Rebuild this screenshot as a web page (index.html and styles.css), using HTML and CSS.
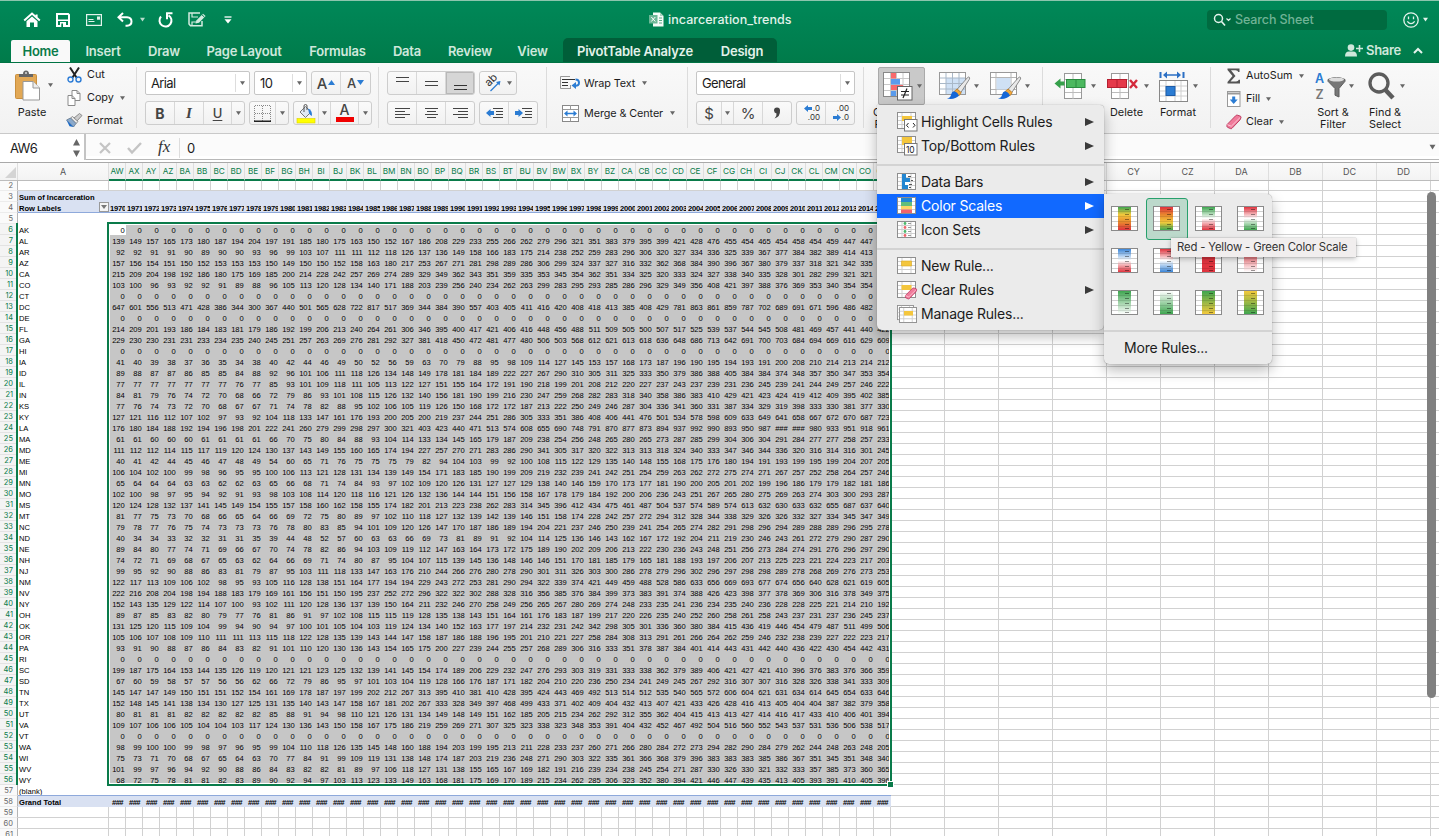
FILE: index.html
```
<!DOCTYPE html>
<html lang="en">
<head>
<meta charset="utf-8">
<title>incarceration_trends</title>
<link rel="stylesheet" href="styles.css">
</head>
<body>
<svg class="defs" aria-hidden="true">
  <defs>
    <symbol id="caret" viewBox="0 0 6 6"><path d="M0 .8h6L3 5.4z"/></symbol>
    <symbol id="eraser" viewBox="0 0 16 16">
      <path d="M1.2 10.4 9.8 1.6Q10.6.9 11.6 1.2l2.600.9Q15.300 2.500 15 3.700l-1 2.200L6 14.300q-.7.700-1.600.300L1.500 13.300Q.3 12.600 1.200 10.400z" fill="#f07b9b" stroke="#b8345a" stroke-width=".9"/>
      <path d="M1.300 10.700 5.300 12.200 14 3.600" fill="none" stroke="#fbc6d4" stroke-width="1"/>
    </symbol>
    <symbol id="grid19" viewBox="0 0 19 17">
      <rect x=".5" y=".5" width="18" height="16" fill="#fff" stroke="#8e8e8e"/>
      <path d="M1 4.500h17M1 8.500h17M1 12.500h17M5 1v15M14 1v15" stroke="#cfcfcf" fill="none"/>
    </symbol>
    <symbol id="brush" viewBox="0 0 26 26">
      <path d="M24.500 1.200Q25.600 2 24.800 3.500L15.500 18l-4-3.500L22.500 2Q23.700.6 24.500 1.200z" fill="#e9e9e9" stroke="#777" stroke-width=".9"/>
      <path d="M11.500 14 16 18l-2.500 3.500-5.500-4.500z" fill="#f2a93b" stroke="#b9741a" stroke-width=".8"/>
      <path d="M8 16.500q4 .5 5.500 5Q9 26 .5 24.500 4.500 23.500 5 20q.7-3 3-3.500z" fill="#1667d6"/>
    </symbol>
  </defs>
</svg>

<header class="titlebar">
  <div class="quick">
    <svg class="q-home" width="18" height="16" viewBox="0 0 18 16"><path d="M1.200 8.600 9 1.600l7.800 7M13.600 2.500v3" fill="none" stroke="#fff" stroke-width="2"/><path d="M3.500 9.300 9 4.500l5.500 4.800V15H11v-4.500H7V15H3.500z" fill="#fff"/></svg>
    <svg class="q-save" width="14" height="14" viewBox="0 0 14 14"><path d="M1 1h11.200l.8.8V13H1z" fill="none" stroke="#fff" stroke-width="2"/><path d="M2 6.500h10v1.400H2zM4 9h6v5H4z" fill="#fff"/><path d="M5.300 10.500h1.700V14H5.300z" fill="#007f4e"/></svg>
    <svg class="q-mail" width="16" height="12" viewBox="0 0 16 12"><rect x=".6" y=".6" width="14.800" height="10.800" fill="none" stroke="#e4f3ec" stroke-width="1.200"/><path d="M11 2.500h3v3.200h-3z" fill="#e4f3ec"/><path d="M2.500 5.500h5M2.500 7.500h6" stroke="#e4f3ec"/></svg>
    <svg class="q-undo" width="16" height="15" viewBox="0 0 16 15"><path d="M6 1 1.500 5.300 6 9.500M2 5.300h8q4.500.2 4.500 4.300T10 13.800H8.500" fill="none" stroke="#fff" stroke-width="2"/></svg>
    <svg class="q-caret"><use href="#caret"/></svg>
    <svg class="q-redo" width="15" height="15" viewBox="0 0 15 15"><path d="M3 4.500a6 6 0 1 0 7.500-1.200" fill="none" stroke="#fff" stroke-width="2"/><path d="M9 7.300V1.300h5.500" fill="none" stroke="#fff" stroke-width="2"/></svg>
    <svg class="q-pen" width="19" height="15" viewBox="0 0 19 15"><path d="M12 1H1v11l1.500 1.800H14V9" fill="none" stroke="#d3ebe0" stroke-width="1.500"/><path d="M4 1v4h6M4 14v-4h4" fill="none" stroke="#d3ebe0" stroke-width="1.200"/><path d="m7.500 11.500.8-3L15 1.800 17.600 4 11 10.800z" fill="#d3ebe0"/><path d="m14 2.800 2.500 2.400" stroke="#007f4e"/></svg>
    <svg class="q-more" width="8" height="8" viewBox="0 0 8 8"><path d="M.5 1h7" stroke="#fff" stroke-width="1.300"/><path d="M.5 3.200h7L4 7.500z" fill="#fff"/></svg>
  </div>
  <div class="doc">
    <svg width="15" height="15" viewBox="0 0 15 15"><path d="M4 .5h7L14.500 4v10.500H4z" fill="#f5fbf8"/><path d="M11 .5V4h3.500" fill="#a9d3c0"/><path d="M10 6h3M10 8.500h3M10 11h3" stroke="#58a985"/><rect y="3" width="8.500" height="8.500" fill="#6bb796"/><path d="m2.300 5 4 4.500M6.300 5l-4 4.500" stroke="#fff"/></svg>
    <span>incarceration_trends</span>
  </div>
  <div class="search">
    <svg width="18" height="14" viewBox="0 0 18 14"><circle cx="5.500" cy="5.500" r="4" fill="none" stroke="#e4f3ec" stroke-width="1.500"/><path d="m8.500 8.500 3.500 4" stroke="#e4f3ec" stroke-width="1.600"/><path d="m13.500 5.500 2 2 2-2" fill="none" stroke="#e4f3ec" stroke-width="1.200"/></svg>
    <span>Search Sheet</span>
  </div>
  <svg class="smile" width="16" height="16" viewBox="0 0 16 16"><circle cx="8" cy="8" r="7.200" fill="none" stroke="#e4f3ec" stroke-width="1.300"/><path d="M5.500 4.500v2.700M10.500 4.500v2.700M4.300 9.300q3.700 4.600 7.400 0" fill="none" stroke="#e4f3ec" stroke-width="1.300"/></svg>
  <svg class="smile-caret"><use href="#caret"/></svg>
</header>

<nav class="tabs">
  <a class="tab on">Home</a><a class="tab">Insert</a><a class="tab">Draw</a><a class="tab">Page Layout</a><a class="tab">Formulas</a><a class="tab">Data</a><a class="tab">Review</a><a class="tab">View</a>
  <div class="context"><a class="tab pivot">PivotTable Analyze</a><a class="tab">Design</a></div>
  <div class="share">
    <svg width="18" height="13" viewBox="0 0 18 13"><circle cx="6" cy="3.600" r="3.300" fill="#cfe8dc"/><path d="M0 12.500q0-5 4-5h4q4 0 4 5z" fill="#cfe8dc"/><path d="M11 4.500h7M14.500 1v7" stroke="#cfe8dc" stroke-width="1.600"/></svg>
    <span>Share</span>
    <svg width="10" height="7" viewBox="0 0 10 7"><path d="M1 6l4-4 4 4" fill="none" stroke="#e4f3ec" stroke-width="2"/></svg>
  </div>
</nav>

<section class="ribbon">
  <div class="group clip">
    <div class="paste">
      <div class="paste-row">
        <svg width="25" height="31" viewBox="0 0 25 31"><rect x=".5" y="4.500" width="21" height="24" rx="1" fill="#e2a855" stroke="#c98f3e"/><path d="M4 7V4h4Q8 .5 11 .5T14 4h4v3z" fill="#666"/><circle cx="11" cy="3" r="1" fill="#ddd"/><path d="M8 11.500h10l6.500 6.500v12H8z" fill="#fff" stroke="#999"/><path d="M18 11.500V18h6.500" fill="#eee" stroke="#999"/></svg>
        <svg class="caret"><use href="#caret"/></svg>
      </div>
      <span class="lbl">Paste</span>
    </div>
    <div class="clip-list">
      <div class="row-item"><svg width="16" height="16" viewBox="0 0 16 16"><path d="m3.500.5 6.500 10M12.500.5 6 10.500" stroke="#222" stroke-width="2" fill="none"/><circle cx="4" cy="12.500" r="2.500" fill="none" stroke="#2c7cd6" stroke-width="1.400"/><circle cx="12" cy="12.500" r="2.500" fill="none" stroke="#2c7cd6" stroke-width="1.400"/></svg><span>Cut</span></div>
      <div class="row-item"><svg width="16" height="16" viewBox="0 0 16 16"><path d="M5.500.5h5l3 3v7h-8z" fill="#fff" stroke="#8a8a8a"/><path d="M10.500.5v3h3" fill="none" stroke="#8a8a8a"/><path d="M1.500 5.500h4l3 3v7h-7z" fill="#fff" stroke="#8a8a8a"/><path d="M5.500 5.500v3h3" fill="none" stroke="#8a8a8a"/></svg><span>Copy</span><svg class="caret"><use href="#caret"/></svg></div>
      <div class="row-item"><svg width="17" height="15" viewBox="0 0 17 15"><path d="m8 5 5.500-4.500 2.500 2L11 8z" fill="#ccc" stroke="#777" stroke-width=".8"/><path d="M6.500 3.500 12 8.500l-2 2L4.500 5z" fill="#e8e8e8" stroke="#777" stroke-width=".8"/><path d="M4.500 5 10 10.500 7.500 14 .5 7z" fill="#8aa9cc" stroke="#66788c" stroke-width=".8"/><path d="m.5 7 7 7-4-.7z" fill="#1667c6"/></svg><span>Format</span></div>
    </div>
  </div>
  <div class="group font">
    <div class="line">
      <div class="field w-font"><span>Arial</span><i><svg class="caret"><use href="#caret"/></svg></i></div>
      <div class="field w-size"><span>10</span><i><svg class="caret"><use href="#caret"/></svg></i></div>
      <div class="seg"><b class="w29"><em class="big">A</em><svg class="up" width="7" height="5"><path d="M0 5 3.500 0 7 5z" fill="#2b7cd3"/></svg></b><b class="w29"><em>A</em><svg class="up" width="7" height="5"><path d="M0 0h7L3.500 5z" fill="#2b7cd3"/></svg></b></div>
    </div>
    <div class="line">
      <div class="seg"><b class="w29 t-b">B</b><b class="w29 t-i">I</b><b class="w28 t-u">U</b><b class="w11"><svg class="caret"><use href="#caret"/></svg></b></div>
      <div class="seg"><b class="w26"><svg width="17" height="17" viewBox="0 0 17 17"><path d="M.5 16V.5h16V16M8.500 1v15M1 8.500h15" fill="none" stroke="#888" stroke-dasharray="1 1"/><path d="M0 16.200h17" stroke="#222" stroke-width="1.400"/></svg></b><b class="w12"><svg class="caret"><use href="#caret"/></svg></b></div>
      <div class="seg"><b class="w25"><svg width="18" height="19" viewBox="0 0 18 19"><rect y="14.500" width="18" height="4.500" fill="#ff0" stroke="#dcd000" stroke-width=".6"/><path d="m3 8 5.500-5.500L14 8l-5.500 5.500z" fill="#dfe8f2" stroke="#777"/><path d="M7 8V2q0-1.500 1.500-1.500T10 2v4" fill="none" stroke="#555"/><path d="M11 4.500q4.500 1.500 4 7.500-2.500-1-3-3z" fill="#2b7cd3"/></svg></b><b class="w12"><svg class="caret"><use href="#caret"/></svg></b><b class="w28 colour"><em class="big">A</em><u></u></b><b class="w12 last"><svg class="caret"><use href="#caret"/></svg></b></div>
    </div>
  </div>
  <div class="group align">
    <div class="line">
      <div class="seg"><b class="w29"><svg width="13" height="20"><path d="M0 4.500h13M0 8.500h13" stroke="#444"/></svg></b><b class="w29"><svg width="13" height="20"><path d="M0 8.500h13M0 12.500h13" stroke="#444"/></svg></b><b class="w28 pressed"><svg width="13" height="20"><path d="M0 12.500h13M0 16.500h13" stroke="#333"/></svg></b></div>
      <div class="seg"><b class="w35"><svg width="18" height="18" viewBox="0 0 18 18"><text x="0" y="0" transform="translate(5 13) rotate(-45)" font-size="11" fill="#333">ab</text><path d="m6.500 17 9-9" stroke="#2b7cd3" stroke-width="1.300"/><path d="m12 8 4.500-1-1 4.500z" fill="#2b7cd3"/></svg><svg class="caret"><use href="#caret"/></svg></b></div>
    </div>
    <div class="line">
      <div class="seg"><b class="w29"><svg width="15" height="13"><path d="M0 1.500h15M0 4.500h10M0 7.500h15M0 10.500h10" stroke="#444"/></svg></b><b class="w29"><svg width="15" height="13"><path d="M1 1.500h13M3 4.500h9M1 7.500h13M3 10.500h9" stroke="#444"/></svg></b><b class="w28"><svg width="15" height="13"><path d="M0 1.500h15M5 4.500h10M0 7.500h15M5 10.500h10" stroke="#444"/></svg></b></div>
      <div class="seg"><b class="w29"><svg width="17" height="13"><path d="M7 1.500h10M10 4.500h7M10 7.500h7M7 10.500h10" stroke="#444"/><path d="M0 6l4.500-4v2H8v4H4.500v2z" fill="#2b7cd3"/></svg></b><b class="w28"><svg width="17" height="13"><path d="M7 1.500h10M10 4.500h7M10 7.500h7M7 10.500h10" stroke="#444"/><path d="M8 6 3.500 2v2H0v4h3.500v2z" fill="#2b7cd3"/></svg></b></div>
    </div>
  </div>
  <div class="group wrap">
    <div class="row-item"><svg width="20" height="14" viewBox="0 0 20 14"><path d="M10 .5H.5v12H11M10.500 9v4" fill="none" stroke="#999"/><path d="M2 3.500h13M2 6.500h6M2 9.500h6" stroke="#333"/><path d="M15.500 3.500q3.500 0 3.500 3.300T15 9.700" fill="none" stroke="#2b7cd3" stroke-width="2"/><path d="m11.500 9.500 4.500-3.500v7z" fill="#2b7cd3"/></svg><span>Wrap Text</span><svg class="caret"><use href="#caret"/></svg></div>
    <div class="row-item"><svg width="18" height="17" viewBox="0 0 18 17"><rect x="1.500" y=".5" width="16" height="16" fill="#fff" stroke="#888"/><path d="M1.500 4.500h16M1.500 12.500h16M9.500 0v4M9.500 12.500v4" stroke="#999"/><path d="M5 8.500h9" stroke="#2b7cd3" stroke-width="1.500"/><path d="m3 8.500 3.500-3v6zM16 8.500l-3.500-3v6z" fill="#2b7cd3"/></svg><span>Merge &amp; Center</span><svg class="caret"><use href="#caret"/></svg></div>
  </div>
  <div class="group number">
    <div class="line"><div class="field w-num"><span>General</span><i><svg class="caret"><use href="#caret"/></svg></i></div></div>
    <div class="line">
      <div class="seg"><b class="w25 t-num">$</b><b class="w12"><svg class="caret"><use href="#caret"/></svg></b><b class="w29 t-num">%</b><b class="w28"><svg width="8" height="12"><path d="M1 3.500a3 3 0 0 1 6 0q.5 6-5.500 8Q4 8.500 3.500 6.400 1 6 1 3.500z" fill="#444"/></svg></b></div>
      <div class="seg"><b class="w29 dec"><span><svg width="8" height="7"><path d="M0 3.500 4 0v2h4v3H4v2z" fill="#2b7cd3"/></svg>.0</span><span>.00</span></b><b class="w28 dec"><span>.00</span><span><svg width="8" height="7"><path d="M8 3.500 4 0v2H0v3h4v2z" fill="#2b7cd3"/></svg>.0</span></b></div>
    </div>
  </div>
  <div class="group styles">
    <div class="tile cf">
      <div class="tile-top held"><svg width="30" height="29" viewBox="0 0 30 29"><rect x=".5" y=".5" width="26" height="24" fill="#fff" stroke="#888"/><path d="M1 6.500h25M1 12.500h25M1 18.500h25M7.500 1v23M13.500 1v23M20 1v23" stroke="#c8c8c8"/><path d="M8 1h5v5.500H8zM8 13h12v5H8z" fill="#f8696b"/><path d="M8 7h9v5.500H8zM8 19h5v5H8z" fill="#5a9bec"/><rect x="14.500" y="14.500" width="14.500" height="13.500" fill="#fff" stroke="#666"/><path d="M18 19.500h8M18 23h8M24 16.500l-4 9.500" stroke="#222" stroke-width="1.200"/></svg><svg class="caret"><use href="#caret"/></svg></div>
      <span class="lbl">Conditional<br>Formatting</span>
    </div>
    <div class="tile ft"><div class="tile-top"><svg width="33" height="29" viewBox="0 0 33 29"><rect x=".5" y=".5" width="26" height="22" fill="#fff" stroke="#999"/><path d="M7 6h19v16H7z" fill="#cfe1f5"/><path d="M1 6h25M1 11.500h25M1 17h25M7 1v21M13.500 1v21M20 1v21" stroke="#a9b8c8"/><use href="#brush" x="7" y="4" width="25" height="24"/></svg><svg class="caret"><use href="#caret"/></svg></div></div>
    <div class="tile cs-t"><div class="tile-top"><svg width="33" height="29" viewBox="0 0 33 29"><rect x=".5" y=".5" width="26" height="22" fill="#fff" stroke="#999"/><path d="M1 5.500h25M1 17.500h25M6 1v21M21 1v21" stroke="#b5b5b5"/><path d="M6.500 6h14v11.500h-14z" fill="#cfe1f5"/><use href="#brush" x="7" y="4" width="25" height="24"/></svg><svg class="caret"><use href="#caret"/></svg></div></div>
  </div>
  <div class="group cells">
    <div class="tile t-ins"><div class="tile-top"><svg width="32" height="27" viewBox="0 0 32 27"><rect x="10.500" y=".5" width="17" height="25" fill="#fff" stroke="#999"/><path d="M11 6.500h16M11 19.500h16M19 1v25" stroke="#bbb"/><path d="m.5 10.500 6-5v3h4v4h-4v3z" fill="#36a04b"/><rect x="12.500" y="6.500" width="18.500" height="8" fill="#4cb85f" stroke="#2b8c40"/><path d="M22 7v7" stroke="#2b8c40"/></svg><svg class="caret"><use href="#caret"/></svg></div><span class="lbl">Insert</span></div>
    <div class="tile t-del"><div class="tile-top"><svg width="32" height="27" viewBox="0 0 32 27"><rect x="4.500" y=".5" width="17" height="25" fill="#fff" stroke="#999"/><path d="M5 6.500h16M5 19.500h16M13 1v25" stroke="#bbb"/><rect x=".5" y="6.500" width="19" height="8" fill="#e5394a" stroke="#b51f30"/><path d="M10 7v7" stroke="#b51f30"/><path d="m23 7 7 8M30 7l-7 8" stroke="#d42a3c" stroke-width="2.400"/></svg><svg class="caret"><use href="#caret"/></svg></div><span class="lbl">Delete</span></div>
    <div class="tile t-fmt"><div class="tile-top"><svg width="30" height="31" viewBox="0 0 30 31"><path d="M1.500 1v6M24.500 1v6" stroke="#2b6fc4" stroke-width="2"/><path d="M6 4h14" stroke="#2b6fc4" stroke-width="1.500"/><path d="m4 4 4-3.500v7zM22 4l-4-3.500v7z" fill="#2b6fc4"/><rect x=".5" y="9.500" width="28" height="21" fill="#fff" stroke="#888"/><path d="M1 15h27M1 25h27M7 10v20M16 10v20M22 10v20M1 20h27" stroke="#d0d0d0"/><rect x="7" y="15.500" width="9" height="9" fill="#2b7cd3" stroke="#1d5ca8"/></svg><svg class="caret"><use href="#caret"/></svg></div><span class="lbl">Format</span></div>
  </div>
  <div class="group edit">
    <div class="edit-list">
      <div class="row-item"><svg width="15" height="16" viewBox="0 0 15 16"><path d="M1 .5h12v3.500h-1.200Q11.300 2.300 9 2.300H4.500L9 8l-5 5.500h5.500q2.300 0 2.800-1.800h1.200V15.500H1V14l5-6L1 2z" fill="#555"/></svg><span>AutoSum</span><svg class="caret"><use href="#caret"/></svg></div>
      <div class="row-item"><svg width="14" height="16" viewBox="0 0 14 16"><rect x=".5" y=".5" width="12.500" height="15" fill="#fff" stroke="#999"/><path d="M1 2.500h12" stroke="#999" stroke-width="2"/><path d="M5.200 5.500h3v3h2.500L6.700 13 2.700 8.500h2.500z" fill="#2b7cd3"/></svg><span>Fill</span><svg class="caret"><use href="#caret"/></svg></div>
      <div class="row-item"><svg width="16" height="16"><use href="#eraser"/></svg><span>Clear</span><svg class="caret"><use href="#caret"/></svg></div>
    </div>
    <div class="tile t-sort"><div class="tile-top"><svg width="32" height="30" viewBox="0 -1 32 30"><text x="0" y="11" font-size="12.500" font-weight="600" fill="#2b7cd3">A</text><text x=".5" y="27" font-size="12.500" font-weight="600" fill="#777">Z</text><path d="M13 7.500q8.500-4 17 0v1.800l-6 7.200v8.500l-4-1.800V16.500l-7-7.200z" fill="#777" stroke="#5e5e5e"/><ellipse cx="21.500" cy="7.500" rx="7.500" ry="2" fill="#ddd"/></svg><svg class="caret"><use href="#caret"/></svg></div><span class="lbl">Sort &amp;<br>Filter</span></div>
    <div class="tile t-find"><div class="tile-top"><svg width="28" height="28" viewBox="0 0 28 28"><circle cx="11" cy="11" r="9" fill="none" stroke="#5c5c5c" stroke-width="3.300"/><path d="m17.500 18 7.500 8" stroke="#5c5c5c" stroke-width="4.500"/></svg><svg class="caret"><use href="#caret"/></svg></div><span class="lbl">Find &amp;<br>Select</span></div>
  </div>
</section>

<section class="formula">
  <div class="namebox"><span>AW6</span><svg width="7" height="18" viewBox="0 0 7 18"><path d="M0 6.500 3.500 0 7 6.500zM0 11.500h7L3.500 18z" fill="#666"/></svg></div>
  <svg class="f-x" width="12" height="12"><path d="m1 1 10 10M11 1 1 11" stroke="#c4c4c4" stroke-width="2.200"/></svg>
  <svg class="f-ok" width="15" height="12"><path d="m1 6 4 4.500L14 1" fill="none" stroke="#c4c4c4" stroke-width="2.400"/></svg>
  <span class="fx">fx</span>
  <span class="fval">0</span>
  <svg class="caret f-drop"><use href="#caret"/></svg>
</section>

<main class="sheet" id="sheet">
  <div class="selection"><span class="handle"></span></div>
  <div class="rowbar"></div>
  <div class="scroll"></div>
</main>

<div class="menu">
  <div class="mi"><svg width="21" height="20" viewBox="0 0 21 20"><use href="#grid19" width="19" height="17"/><path d="M5 4h10v5H5z" fill="#f4c63d"/><rect x="7.500" y="7.500" width="12.500" height="11.500" fill="#fff" stroke="#777"/><path d="m11.500 11-2 2.300 2 2.200M16 11l2 2.300-2 2.200" fill="none" stroke="#222"/></svg><span>Highlight Cells Rules</span><i></i></div>
  <div class="mi"><svg width="21" height="20" viewBox="0 0 21 20"><use href="#grid19" width="19" height="17"/><path d="M5 1h10v8H5z" fill="#f4c63d"/><rect x="7.500" y="7.500" width="12.500" height="11.500" fill="#fff" stroke="#777"/><text x="9" y="16.500" font-size="8.500" fill="#222">10</text></svg><span>Top/Bottom Rules</span><i></i></div>
  <hr>
  <div class="mi"><svg width="21" height="20" viewBox="0 0 21 20"><use href="#grid19" y="1" width="19" height="17"/><path d="M5 2h4v4h4v4H8v3h3v4H5z" fill="#2386d1"/><path d="M11 4.500h3M14 8.500h2M12 12.500h3M12 15.500h2" stroke="#555"/></svg><span>Data Bars</span><i></i></div>
  <div class="mi active"><svg width="21" height="20" viewBox="0 0 21 20"><use href="#grid19" y="1" width="19" height="17"/><path d="M4 2h11v4H4z" fill="#2386d1"/><path d="M4 6h11v4H4z" fill="#63be7b"/><path d="M4 10h11v3.500H4z" fill="#fcd667"/><path d="M4 13.500h11V17H4z" fill="#f0626b"/></svg><span>Color Scales</span><i></i></div>
  <div class="mi"><svg width="21" height="20" viewBox="0 0 21 20"><use href="#grid19" y="1" width="19" height="17"/><g fill="#f0626b"><circle cx="8" cy="7.500" r="1.400"/><circle cx="8" cy="15.500" r="1.400"/></g><g fill="#4cb86a"><circle cx="8" cy="3.500" r="1.400"/><circle cx="8" cy="11.500" r="1.400"/></g><path d="M11 3.500h3M11 7.500h3M11 11.500h3M11 15.500h3" stroke="#999"/></svg><span>Icon Sets</span><i></i></div>
  <hr>
  <div class="mi"><svg width="21" height="20" viewBox="0 0 21 20"><use href="#grid19" y="1" width="19" height="17"/><path d="M4.500 5h10v5h-10z" fill="#f4c63d" stroke="#d8a826" stroke-width=".6"/></svg><span>New Rule...</span></div>
  <div class="mi"><svg width="21" height="20" viewBox="0 0 21 20"><use href="#grid19" y="1" width="19" height="17"/><path d="M4.500 5h10v5h-10z" fill="#f4c63d"/><use href="#eraser" x="7.500" y="7" width="13" height="13"/></svg><span>Clear Rules</span><i></i></div>
  <div class="mi"><svg width="21" height="20" viewBox="0 0 21 20"><use href="#grid19" y="1" width="17" height="15.200"/><use href="#grid19" x="2" y="3" width="18" height="16"/><path d="M7 7h9v4.500H7z" fill="#f4c63d"/></svg><span>Manage Rules...</span></div>
</div>

<div class="submenu">
  <div class="scales" id="scales"></div>
  <hr>
  <div class="more">More Rules...</div>
</div>
<div class="tooltip">Red - Yellow - Green Color Scale</div>
<script src="sheet.js"></script>
</body>
</html>
```
FILE: styles.css
```
* { box-sizing: border-box; }
body { margin: 0; width: 1439px; height: 836px; overflow: hidden; position: relative; display: flex; flex-direction: column; background: #fff; font-family: Inter, "Liberation Sans", sans-serif; color: #1c1c1c; }
svg { display: block; flex: none; overflow: visible; }
.defs { position: absolute; width: 0; height: 0; overflow: hidden; }
hr { border: 0; margin: 0; }

/* title bar */
.titlebar { height: 38px; flex: none; border-top: 1px solid #8cc5ad; background: linear-gradient(#008858, #008050); display: flex; align-items: center; }
.quick { display: flex; align-items: center; width: 648px; padding-left: 23px; }
.q-save { margin-left: 15px; }
.q-mail { margin-left: 16px; }
.q-undo { margin-left: 15px; }
.q-caret { width: 5px; height: 5px; margin-left: 7px; fill: #b9dccd; }
.q-redo { margin-left: 13px; }
.q-pen { margin-left: 15px; }
.q-more { margin-left: 17px; }
.doc { display: flex; align-items: center; width: 559px; font-size: 12.500px; font-weight: 500; color: #e2f2ea; }
.doc svg { margin-left: 1px; }
.doc span { margin-left: 4px; letter-spacing: .05px; }
.search { width: 180px; height: 20px; border-radius: 4px; background: #006b40; display: flex; align-items: center; padding-left: 6px; color: #70b396; font-size: 12.500px; font-weight: 500; }
.search span { margin-left: 4px; letter-spacing: -.1px; }
.smile { margin-left: 16px; }
.smile-caret { width: 5px; height: 5px; margin-left: 4px; fill: #e4f3ec; }

/* tabs */
.tabs { height: 25px; flex: none; background: linear-gradient(#008050, #007b4a); border-bottom: 1px solid #007344; display: flex; align-items: flex-end; padding-left: 11px; }
.tab { display: block; height: 22px; line-height: 23px; text-align: center; font-size: 13px; font-weight: 600; letter-spacing: -.2px; color: #cfe8dc; width: 55px; white-space: nowrap; }
.tab.on { width: 59px; background: #f9f9f9; color: #0a7b4a; border-radius: 2px 2px 0 0; }
.tab:nth-child(2) { width: 66px; }
.tab:nth-child(3) { width: 56px; }
.tab:nth-child(4) { width: 104px; }
.tab:nth-child(5) { width: 83px; }
.tab:nth-child(6) { width: 56px; }
.tab:nth-child(7) { width: 70px; }
.tab:nth-child(8) { width: 55px; }
.context { width: 214px; height: 24px; margin-left: 3px; background: #005e39; border-radius: 5px 5px 0 0; display: flex; align-items: flex-end; }
.context .tab { color: #e3f2ea; width: 70px; }
.context .tab.pivot { width: 144px; }
.share { margin-left: 568px; height: 24px; display: flex; align-items: center; font-size: 13px; font-weight: 600; color: #cfe8dc; letter-spacing: -.3px; }
.share span { margin: 0 12px 0 3px; }

/* ribbon */
.ribbon { height: 71px; flex: none; background: linear-gradient(#f9f9f9, #f2f2f2); border-bottom: 1px solid #c9c9c9; display: flex; font-size: 10.800px; }
.group { position: relative; flex: none; height: 70px; }
.group::after { content: ""; position: absolute; right: 0; top: 4px; width: 1px; height: 61px; background: #dcdcdc; }
.group.edit::after { display: none; }
.caret { width: 5px; height: 6px; fill: #666; flex: none; }
.clip { width: 137px; display: flex; }
.font { width: 242px; }
.align { width: 168px; }
.wrap { width: 141px; padding: 10px 0 0 13px; display: flex; flex-direction: column; gap: 10px; }
.number { width: 176px; }
.styles { width: 179px; display: flex; }
.cells { width: 168px; display: flex; }
.edit { width: 228px; display: flex; }
.font, .align, .number { padding: 8px 0 0 8px; display: flex; flex-direction: column; gap: 6px; }
.line { display: flex; gap: 4px; height: 24px; }
.paste { width: 66px; padding: 6px 0 0 15px; }
.paste-row { display: flex; align-items: center; gap: 8px; height: 32px; }
.lbl { display: block; text-align: center; line-height: 12px; font-size: 10.900px; white-space: nowrap; }
.paste .lbl { width: 34px; margin-top: 5px; }
.row-item { display: flex; align-items: center; height: 23px; white-space: nowrap; }
.clip-list .row-item svg:first-child { width: 17px; }
.clip-list .row-item span { margin-left: 4px; }
.row-item .caret { margin-left: 6px; }
.wrap .row-item { height: 20px; }
.wrap .row-item svg:first-child { width: 20px; }
.wrap .row-item span { margin-left: 4px; letter-spacing: -.08px; }
.wrap .row-item .caret { margin-left: 7px; }
.field { height: 24px; border: 1px solid #c6c6c6; border-radius: 2px; background: #fff; display: flex; align-items: center; justify-content: space-between; font-size: 13px; letter-spacing: -.65px; padding-left: 5px; }
.field i { width: 14px; height: 18px; border-left: 1px solid #ddd; display: flex; align-items: center; justify-content: center; }
.w-font { width: 105px; }
.w-size { width: 53px; }
.w-num { width: 159px; }
.seg { height: 24px; border: 1px solid #cdcdcd; border-radius: 3px; background: linear-gradient(#fafafa, #f1f1f1); display: flex; overflow: hidden; }
.seg b { font-weight: 400; border-right: 1px solid #d8d8d8; display: flex; align-items: center; justify-content: center; height: 22px; }
.seg b:last-child { border-right: 0; }
.seg em { font-style: normal; font-weight: 500; font-size: 13px; color: #444; }
.seg em.big { font-size: 15px; }
.seg .up { margin: 0 0 2px 1px; }
.w29 { width: 29px; } .w28 { width: 28px; } .w26 { width: 26px; } .w25 { width: 25px; } .w12 { width: 12px; } .w11 { width: 12px; } .w35 { width: 36px; gap: 5px; }
.seg .t-b { font-weight: 700; font-size: 14px; color: #444; }
.seg .t-i { font: italic 700 15px "Liberation Serif", serif; color: #444; }
.seg .t-u { font-weight: 500; font-size: 13px; color: #444; text-decoration: underline; text-underline-offset: 2px; }
.seg .t-num { font-size: 15px; color: #444; }
.colour { flex-direction: column; }
.seg .colour { justify-content: flex-start; }
.colour em.big { line-height: 15px; font-size: 14px; }
.colour u { width: 18px; height: 5px; background: #f00000; }
.pressed { background: #d6d6d6; box-shadow: inset 0 0 0 1px #b8b8b8; }
.seg .dec { flex-direction: column; align-items: flex-end; padding-right: 5px; font-size: 8px; line-height: 9px; color: #333; }
.dec span { display: flex; align-items: center; gap: 1px; }
.tile { display: flex; flex-direction: column; align-items: flex-start; }
.tile-top { display: flex; align-items: center; height: 38px; margin-top: 4px; }
.tile .lbl { margin-top: 1px; }
.cf { width: 74px; padding-left: 14px; }
.held { width: 47px; background: #c9c9c9; border: 1px solid #aaa; border-radius: 2px; padding-left: 4px; }
.held .caret { margin-left: 4px; }
.cf .lbl { margin-left: -5px; }
.ft, .cs-t { width: 51px; }
.ft .tile-top, .cs-t .tile-top { padding-left: 1px; }
.ft .caret, .cs-t .caret { margin-left: 2px; }
.t-ins { width: 64px; padding-left: 11px; }
.t-ins .caret, .t-del .caret { margin-left: 5px; }
.t-del { width: 52px; }
.t-fmt .caret { margin-left: 4px; }
.t-del .lbl { margin-left: 3px; }
.t-fmt .lbl { margin-left: 1px; }
.edit-list { width: 104px; padding: 1px 0 0 15px; }
.edit-list .row-item svg:first-child { width: 16px; }
.edit-list .row-item span { margin-left: 4px; }
.t-sort { width: 53px; }
.t-sort .caret { margin-left: 2px; }
.t-sort .lbl, .t-find .lbl { width: 36px; }
.t-find .caret { margin-left: 4px; }
.t-find .lbl { margin-left: -1px; }

/* formula bar */
.formula { height: 29px; flex: none; background: linear-gradient(#fbfbfb 0 22px, #fff 22px); border-bottom: 1px solid #a9a9a9; box-shadow: inset 0 -2px #fff, inset 0 -3px #b8b8b8; display: flex; align-items: center; padding-bottom: 2px; font-size: 13px; }
.namebox { width: 86px; height: 26px; background: #fff; border-right: 2px solid #c4c4c4; display: flex; align-items: center; justify-content: space-between; padding: 2px 4px 0 10px; letter-spacing: -.7px; }
.f-x { margin: 2px 0 0 13px; }
.f-ok { margin: 2px 0 0 16px; }
.fx { font: italic 17px "Liberation Serif", serif; margin: 2px 0 0 16px; width: 22px; height: 20px; line-height: 18px; color: #333; border-right: 1px solid #ddd; }
.fval { margin: 1px 0 0 7px; flex: 1; }
.f-drop { width: 7px; height: 6px; margin-right: 3px; }

/* sheet */
.sheet { position: relative; flex: 1; overflow: hidden; width: 1439px; font-family: "Liberation Sans", Arial, sans-serif; }
.r { display: grid; grid-template-columns: 18px 91px repeat(46, 17px) repeat(11, 54px); width: 1485px; height: 11px; font-size: 7.600px; line-height: 11px; color: #000; }
.r > * { overflow: hidden; white-space: nowrap; height: 11px; }
.r.head { height: 18px; font: 9px/17px Inter, sans-serif; color: #555; background: linear-gradient(#fafafa, #f3f3f3); border-bottom: 1px solid #bcbcbc; text-align: center; }
.head > * { border-right: 1px solid #dedede; height: 17px; }
.head .sel { color: #0a7b4a; background: linear-gradient(#f6f6f6, #efefef); border-bottom: 2px solid #0a7b4a; height: 18px; letter-spacing: -.1px; font-size: 8.200px; }
.corner::after { content: ""; display: block; margin: 4px 0 0 5px; border: solid transparent; border-width: 0 0 11px 11px; border-bottom-color: #d4d4d4; width: 0; }
.n { font-family: Inter, sans-serif; font-size: 7.500px; text-align: right; padding-right: 4px; color: #666; background: #fafafa; border-right: 1px solid #b5b5b5; border-bottom: 1px solid #ececec; }
.n.sel { color: #0a7b4a; background: #f4f4f4; border-bottom-color: #e3e3e3; }
.g { border-right: 1px solid #d1d1d1; border-bottom: 1px solid #d1d1d1; }
.r.first { height: 10px; }
.r.first > * { line-height: 10px; height: 10px; }
.a { padding: 1px 0 0 1px; }
.v { background: #c6c6c6; text-align: right; padding: 1px 1.500px 0 0; letter-spacing: -.15px; }
.v.cur { background: #fff; }
.blue { background: #d9e1f2; font-weight: 700; }
.yr { padding: 1px 0 0 1px; text-align: left; letter-spacing: -.2px; }
.yr span { display: block; width: 15px; overflow: hidden; }
.tot { text-align: center; letter-spacing: -.5px; padding-top: 1px; }
.under { border-bottom: 1px solid #8ea9db; }
.filter { display: flex; justify-content: space-between; }
.filter svg { width: 10px; height: 10px; margin-top: -1px; border: 1px solid #999; background: #f4f4f4; fill: #777; padding: 1px; }
.selection { position: absolute; left: 107px; top: 59px; width: 785px; height: 564px; border: 2px solid #0a7b4a; box-shadow: inset 0 0 0 1px #fff; }
.handle { position: absolute; right: -4px; bottom: -4px; width: 7px; height: 7px; background: #0a7b4a; border: 1px solid #fff; }
.rowbar { position: absolute; left: 16px; top: 60px; width: 2px; height: 562px; background: #0a7b4a; }
.scroll { position: absolute; left: 1427px; top: 29px; width: 9px; height: 506px; border-radius: 5px; background: #808080; }

/* menus */
.menu { position: absolute; left: 877px; top: 105px; width: 227px; height: 225px; padding-top: 5px; background: #ebebeb; border-radius: 0 4px 5px 5px; box-shadow: 0 0 1px rgba(0,0,0,.45), 0 6px 14px rgba(0,0,0,.28); font-size: 14px; letter-spacing: -.2px; }
.mi { height: 24px; display: flex; align-items: center; padding: 0 10px 0 20px; }
.mi span { margin-left: 3px; flex: 1; white-space: nowrap; padding-bottom: 2px; }
.mi i { border: solid transparent; border-width: 4.500px 0 4.500px 9px; border-left-color: #3a3a3a; margin-bottom: 1px; }
.menu hr { height: 2px; background: #d3d3d3; margin: 6px 0 4px; }
.mi.active { background: #1169ff; color: #fff; }
.mi.active i { border-left-color: #fff; }
.submenu { position: absolute; left: 1104px; top: 194px; width: 168px; height: 170px; background: #ebebeb; border-radius: 0 5px 5px 5px; box-shadow: 0 0 1px rgba(0,0,0,.45), 0 6px 14px rgba(0,0,0,.28); }
.scales { display: grid; grid-template-columns: repeat(4, 42px); grid-auto-rows: 42px; padding-top: 4px; height: 136px; }
.cell { display: flex; align-items: center; justify-content: center; border: 1px solid transparent; border-radius: 3px; padding: 0 2px 2px 0; }
.cell.on { background: #bcd9cb; border-color: #28a06c; }
.submenu hr { height: 2px; background: #d3d3d3; }
.more { font-size: 14px; letter-spacing: -.2px; padding: 7px 0 0 20px; line-height: 17px; }
.tooltip { position: absolute; left: 1171px; top: 238px; width: 185px; height: 19px; background: #f1eeee; box-shadow: 0 0 1px rgba(0,0,0,.4), 0 2px 5px rgba(0,0,0,.25); font-size: 11.300px; line-height: 19px; padding-left: 6px; color: #333; white-space: nowrap; letter-spacing: -.15px; }
```
FILE: sheet.js
```
const rows = `AK 0
AL 139 149 157 165 173 180 187 194 204 197 191 185 180 175 163 150 152 167 186 208 229 233 255 266 262 279 296 321 351 383 379 395 399 421 428 476 455 454 465 454 458 454 459 447 447 440
AR 92 92 91 91 90 89 90 90 93 96 99 103 107 111 111 112 118 126 137 136 149 158 166 183 175 214 238 252 259 283 296 306 320 327 334 336 325 339 367 377 384 382 389 414 413 413
AZ 157 156 154 151 150 152 153 153 153 150 149 150 150 152 158 163 180 217 253 267 271 281 298 289 286 306 299 324 337 327 316 332 362 368 384 390 396 367 380 379 337 318 321 342 335 335
CA 215 209 204 198 192 186 180 175 169 185 200 214 228 242 257 269 274 289 329 349 362 343 351 359 335 353 345 354 362 351 334 325 320 333 324 327 338 340 335 328 301 282 299 321 321 321
CO 103 100 96 93 92 92 91 89 88 96 105 113 120 128 134 140 171 188 203 239 256 240 234 262 263 299 283 295 293 285 286 296 329 349 356 408 421 397 388 376 369 353 340 354 354 354
CT 0
DC 647 601 556 513 471 428 386 344 300 367 440 501 565 628 722 817 517 369 344 384 390 557 403 405 411 416 420 408 418 413 385 408 429 781 863 861 859 787 702 689 691 671 596 486 482 482
DE 0
FL 214 209 201 193 186 184 183 181 179 186 192 199 206 213 240 264 261 306 346 395 400 417 421 406 416 448 456 488 511 509 505 500 507 517 525 539 537 544 545 508 481 469 457 441 440 422
GA 229 230 230 231 231 233 234 235 240 245 251 257 263 269 276 281 292 327 381 418 450 472 481 477 480 506 503 568 612 621 613 618 636 648 686 713 642 691 700 703 684 694 669 616 629 609
HI 0
IA 41 40 39 38 37 36 35 34 38 40 42 44 46 49 50 52 56 59 63 70 79 88 95 98 109 114 127 145 153 157 168 173 187 196 190 195 194 193 191 200 208 210 214 213 214 212
ID 89 88 87 87 86 85 85 84 88 92 96 101 106 111 118 126 134 148 149 178 181 184 189 222 227 267 290 310 305 311 325 333 350 379 386 388 405 384 384 374 348 357 350 347 353 354
IL 77 77 77 77 77 77 77 76 77 85 93 101 109 118 111 105 113 122 127 151 155 164 172 191 190 218 199 201 208 212 220 227 237 243 237 239 231 236 245 239 241 244 249 257 246 222
IN 84 81 79 76 74 72 70 68 66 72 79 86 93 101 108 115 126 132 140 156 181 190 199 216 230 247 259 268 282 283 318 340 358 386 383 410 429 421 423 424 419 412 409 395 402 385
KS 77 76 74 73 72 70 68 67 67 71 74 78 82 88 95 102 106 105 119 126 150 168 172 172 187 213 222 250 249 246 287 304 336 341 360 331 387 334 329 319 398 333 330 381 377 330
KY 127 121 116 112 107 102 97 93 92 104 118 133 147 161 176 193 200 205 200 219 237 244 251 286 305 333 351 386 408 406 441 476 501 534 578 598 609 633 649 641 658 667 672 670 687 723
LA 176 180 184 188 192 194 196 198 201 222 241 260 279 299 298 297 300 321 403 423 440 471 513 574 608 655 690 748 791 870 877 873 894 937 992 990 893 950 987 ### ### 980 933 951 918 961
MA 61 61 60 60 60 61 61 61 61 66 70 75 80 84 88 93 104 114 133 134 145 165 179 187 209 238 254 256 248 265 280 265 273 287 285 299 304 306 304 291 284 277 277 258 257 233
MD 111 112 112 114 115 117 119 120 124 130 137 143 149 155 160 165 174 194 227 257 270 271 283 286 290 341 305 317 320 322 313 313 318 324 340 333 347 346 344 336 320 316 314 316 301 245
ME 40 41 42 44 45 46 47 48 49 54 60 65 71 76 75 75 75 79 82 94 104 103 99 92 100 108 115 122 129 135 140 148 155 168 175 176 180 194 191 193 199 195 199 204 207 205
MI 106 104 102 100 99 98 96 95 95 100 106 113 121 128 131 134 139 149 154 171 183 185 190 199 209 219 232 239 241 242 251 254 259 263 262 272 275 274 271 267 257 252 258 264 257 246
MN 65 64 64 64 63 63 62 62 63 65 66 68 71 74 84 93 97 102 109 120 126 131 127 127 129 138 140 146 159 170 173 177 181 190 200 205 201 202 199 196 186 179 179 182 181 186
MO 102 100 98 97 95 94 92 91 93 98 103 108 114 120 118 116 121 126 132 136 144 144 151 156 158 167 178 179 184 192 200 206 236 243 251 267 265 280 275 269 263 274 303 300 293 287
MS 120 124 128 132 137 141 145 149 154 155 157 158 160 162 158 155 174 182 201 213 223 238 262 283 314 345 396 412 434 475 461 487 504 537 574 589 574 613 632 630 633 632 655 687 637 640
MT 81 77 75 73 70 68 66 65 64 66 69 72 75 80 89 97 102 110 118 127 132 139 142 139 146 151 158 174 228 242 257 272 294 312 328 344 338 329 326 326 332 327 334 345 347 349
NC 79 78 77 76 75 74 73 73 73 76 78 80 83 85 94 101 109 120 126 147 170 187 186 189 194 204 221 237 246 250 239 241 254 265 274 282 291 298 296 294 289 288 289 296 295 278
ND 40 34 34 33 32 32 31 31 35 39 44 48 52 57 60 63 63 66 69 73 81 89 91 92 104 114 125 136 146 143 162 167 172 192 204 211 219 230 246 243 261 272 279 290 287 290
NE 89 84 80 77 74 71 69 66 67 70 74 78 82 86 94 103 109 119 112 147 163 164 173 172 175 189 190 202 209 206 213 222 230 236 243 248 251 256 273 284 274 291 276 296 297 290
NH 74 72 71 69 68 67 65 63 62 64 66 69 71 74 80 87 95 104 107 115 139 145 136 148 146 146 151 170 181 185 179 165 181 188 193 197 206 207 213 225 223 221 224 223 217 203
NJ 99 95 92 90 88 86 83 81 79 87 95 103 111 118 133 147 163 176 210 244 266 276 280 278 290 301 311 326 303 300 286 278 279 296 302 296 297 298 298 289 278 268 269 276 273 253
NM 122 117 113 109 106 102 98 95 93 105 116 128 138 151 164 177 194 194 229 243 272 253 281 290 294 322 339 374 421 449 459 488 528 586 633 656 669 693 677 674 656 640 628 621 619 605
NV 222 216 208 204 198 194 188 183 179 169 161 156 151 150 195 237 252 272 296 322 322 302 288 328 316 356 385 376 384 399 373 383 391 374 388 426 423 398 377 378 369 306 316 378 349 375
NY 152 143 135 129 122 114 107 100 93 102 111 120 128 136 137 139 150 164 211 232 246 270 258 249 256 265 267 280 269 274 248 233 235 241 236 234 235 240 236 228 228 225 221 214 210 192
OH 89 87 85 83 82 80 79 77 76 81 86 91 97 102 108 115 115 119 128 135 138 143 151 164 161 176 183 187 199 217 220 226 235 240 252 260 258 261 258 243 237 231 237 236 245 237
OK 131 125 120 115 109 104 99 94 90 94 97 100 101 105 104 103 119 124 134 140 152 163 177 197 214 232 231 242 342 298 305 301 336 360 380 384 415 436 419 446 454 479 487 511 499 506
OR 105 106 107 108 109 110 111 111 113 115 118 122 128 135 139 143 144 147 158 187 186 188 196 195 201 210 221 227 258 284 308 313 291 261 266 264 262 259 246 232 238 239 227 222 223 217
PA 93 91 90 88 87 86 84 83 82 91 101 110 120 130 136 143 154 165 175 200 227 239 244 255 257 268 289 306 316 333 351 378 387 384 401 414 443 431 442 440 436 422 430 454 442 431
RI 0
SC 199 187 175 164 153 144 135 126 119 120 121 121 123 125 132 139 141 145 154 174 189 206 229 232 247 276 293 303 319 331 333 338 362 379 389 406 421 427 421 410 396 376 383 376 366 359
SD 67 60 59 58 57 57 56 56 62 66 72 79 86 95 97 101 103 104 119 128 166 176 187 171 182 204 210 220 236 250 234 241 249 245 267 292 316 307 307 316 328 326 338 341 333 309
TN 145 147 147 149 150 151 151 152 154 161 169 178 187 197 199 202 212 267 313 395 410 381 410 428 395 424 443 469 492 513 514 512 535 540 565 572 606 604 621 631 634 614 645 654 633 646
TX 152 148 145 141 138 134 130 127 125 131 135 140 143 147 158 167 181 202 267 333 328 349 397 468 499 433 371 402 409 404 432 413 407 421 433 426 428 416 413 405 404 404 387 382 379 358
UT 80 81 81 81 82 82 82 82 82 85 88 91 94 98 110 121 126 131 134 149 148 149 151 162 185 205 215 234 262 292 312 355 362 404 415 413 413 427 414 416 417 433 410 406 401 394
VA 109 107 106 106 105 104 104 103 117 124 130 136 143 150 158 167 175 186 219 259 269 271 307 325 323 338 323 348 353 391 404 432 452 467 492 504 516 560 552 543 537 531 536 506 538 517
VT 0
WA 98 99 100 100 99 98 97 96 95 99 104 110 118 126 135 145 148 160 188 194 203 199 195 213 211 228 233 237 260 271 266 280 284 272 273 294 282 290 284 279 262 244 248 263 248 205
WI 75 73 71 70 68 67 65 64 63 70 77 84 91 99 109 119 131 138 148 174 187 203 219 236 248 271 290 303 322 335 361 366 368 379 396 383 383 383 385 386 367 351 345 351 348 340
WV 101 99 97 96 94 92 90 88 86 84 83 82 82 81 89 97 106 118 127 131 138 155 165 167 169 182 191 216 239 234 238 245 254 271 287 330 326 330 321 332 333 357 385 373 360 365
WY 68 72 75 78 81 81 82 83 89 90 92 94 97 103 113 123 133 149 163 168 181 175 169 170 189 215 234 262 285 306 323 352 380 394 421 446 447 439 435 413 405 393 391 410 405 396`.split("\n").map(l => l.split(" "));

const N = 46;
const colName = i => String.fromCharCode(64 + Math.floor(i / 26)) + String.fromCharCode(65 + i % 26);
const times = (n, f) => Array.from({ length: n }, (_, i) => f(i)).join("");
const rest = times(11, () => '<div class="g"></div>');
const row = (num, a, cells, sel, extra = "") =>
  `<div class="r ${extra}"><div class="n ${sel ? "sel" : ""}">${num}</div>${a}${cells}${rest}</div>`;
const blank = (num, extra) => row(num, '<div class="g"></div>', times(N, () => '<div class="g"></div>'), false, extra);

let html = '<div class="r head"><div class="corner"></div><div>A</div>'
  + times(N, i => `<div class="sel">${colName(48 + i)}</div>`)
  + times(11, i => `<div>${i < 10 ? colName(98 + i) : ""}</div>`) + "</div>";
html += blank(2, "first");
html += row(3, '<div class="a blue">Sum of Incarceration</div>', times(N, () => '<div class="blue"></div>'));
html += row(4, '<div class="a blue under filter">Row Labels<svg viewBox="0 0 6 6"><path d="M0 1h6L3 5z"/></svg></div>',
  times(N, i => `<div class="blue under yr"><span>${1970 + i}</span></div>`));
html += row(5, "<div></div>", times(N, () => "<div></div>"));
rows.forEach(([state, ...vals], r) => {
  html += row(r + 6, `<div class="a">${state}</div>`,
    times(N, i => `<div class="v${r + i === 0 ? " cur" : ""}">${vals.length === 1 ? vals[0] : vals[i]}</div>`), true);
});
html += row(57, '<div class="a under">(blank)</div>', times(N, () => '<div class="under"></div>'));
html += row(58, '<div class="a blue">Grand Total</div>', times(N, () => '<div class="blue tot">###</div>'));
html += blank(59) + blank(60) + blank(61);
document.getElementById("sheet").insertAdjacentHTML("afterbegin", html);

const G = "#3fa650", Y = "#f3c93c", R = "#e0343f", W = "#ffffff", B = "#3d87d8", O = "#e8862e";
const scales = [[G, Y, O, R], [R, O, Y, G], [G, W, R], [R, W, G], [B, W, R], [R, W, B], [R, R], [R, W], [G, W], [W, G], [G, Y], [Y, G]];
document.getElementById("scales").innerHTML = scales.map((s, i) => {
  const stops = s.map((c, k) => `<stop offset="${k / (s.length - 1)}" stop-color="${c}"/>`).join("");
  return `<div class="cell${i === 1 ? " on" : ""}"><svg width="27" height="25" viewBox="0 0 27 25">
    <defs><linearGradient id="s${i}" x2="0" y2="1">${stops}</linearGradient></defs>
    <rect x=".5" y=".5" width="26" height="24" fill="#fff" stroke="#8a8a8a"/>
    <path d="M1 5.500h25M1 10.500h25M1 15.500h25M1 20.500h25" stroke="#cfcfcf"/>
    <rect x="7" y="1" width="13" height="23" fill="url(#s${i})"/>
    <path d="M7 5.500h13M7 10.500h13M7 15.500h13M7 20.500h13" stroke="#000" stroke-opacity=".1"/>
    <path d="M14 3.500h4M14 8.500h4M14 13.500h4M14 18.500h4M14 22.500h4" stroke="#000" stroke-opacity=".4"/></svg></div>`;
}).join("");
```
